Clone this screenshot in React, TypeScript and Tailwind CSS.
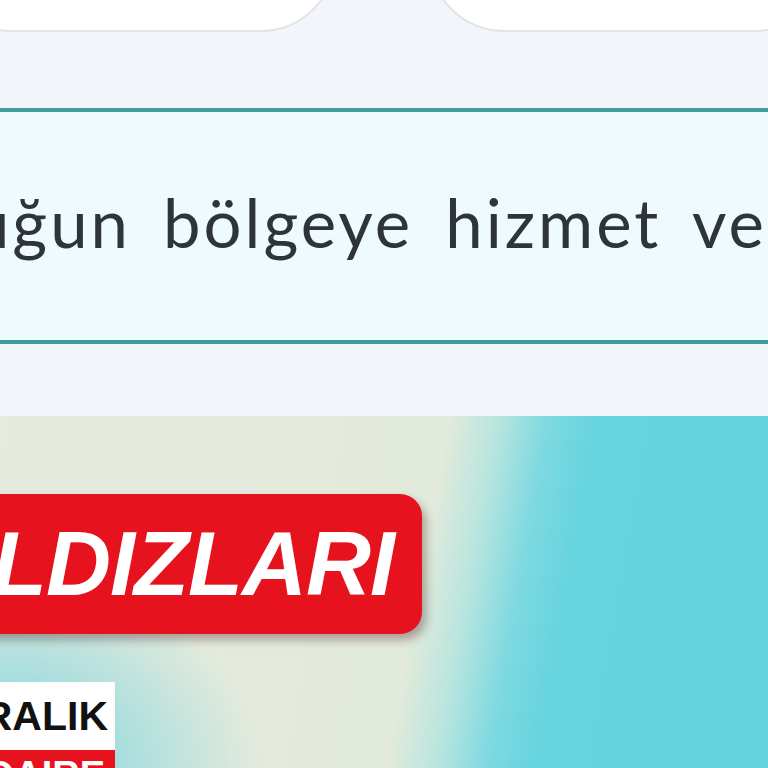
export default function App() {
  return (
    <div className="w-[768px] h-[768px] overflow-hidden bg-[#f2f5f9] font-['Lato',sans-serif]">
      {/* top tab cards, only their bottoms are visible */}
      <div className="flex h-[32px] items-end overflow-hidden">
        <div className="-ml-[64px] h-[150px] w-[400px] shrink-0 rounded-[116px] border-2 border-[#e2e4e7] bg-white" />
        <div className="ml-[93px] h-[150px] w-[400px] shrink-0 rounded-[116px] border-2 border-[#e2e4e7] bg-white" />
      </div>

      {/* service area notice */}
      <div className="mt-[76px] flex h-[236px] items-center overflow-hidden border-y-[4px] border-[#3f9d9b] bg-[#effafc]">
        <p className="-ml-[28px] whitespace-nowrap pb-[8px] text-[67px] leading-none tracking-[3px] [word-spacing:12px] text-[#2e3438]">
          uğun bölgeye hizmet veriyoruz
        </p>
      </div>

      {/* campaign banner */}
      <div className="mt-[72px] flex h-[352px] flex-col overflow-hidden bg-[#67d5df] bg-[radial-gradient(ellipse_260px_200px_at_0px_352px,#74d3dc_0%,rgba(116,211,220,0)_100%),linear-gradient(100deg,#e6ebe0_0%,#e2eadb_54%,#b9e5df_60%,#7fd9e0_66%,#66d4de_72%,#63d2dc_100%)]">
        <div className="-ml-[60px] mt-[78px] flex h-[140px] w-[482px] shrink-0 items-center justify-end overflow-hidden rounded-[22px] bg-[#e6121d] pr-[28px] shadow-[4px_6px_10px_rgba(60,20,20,0.35)]">
          <span className="whitespace-nowrap font-['Liberation_Sans',sans-serif] text-[90px] font-bold italic leading-none tracking-[-1px] text-white">
            YILDIZLARI
          </span>
        </div>

        <div className="-ml-[60px] mt-[48px] flex w-[175px] flex-col">
          <div className="flex h-[68px] items-center justify-end bg-white pr-[7px]">
            <span className="font-['Liberation_Sans',sans-serif] text-[41px] font-bold leading-none text-[#111]">
              KİRALIK
            </span>
          </div>
          <div className="flex h-[60px] items-start justify-end bg-[#e6121d] pr-[10px] pt-[6px]">
            <span className="font-['Liberation_Sans',sans-serif] text-[38px] font-bold leading-none text-white">
              DAIRE
            </span>
          </div>
        </div>
      </div>
    </div>
  );
}
